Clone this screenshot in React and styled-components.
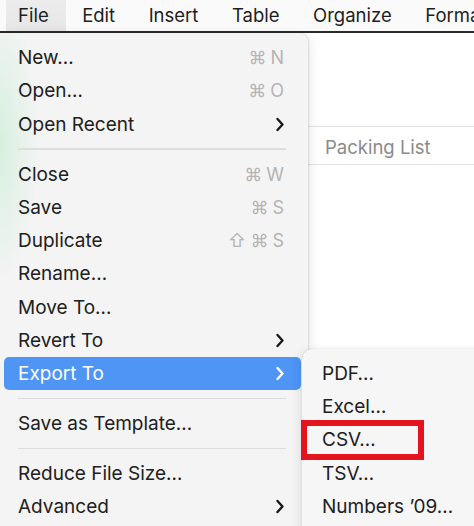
import React from "react";
import styled, { createGlobalStyle } from "styled-components";

const Global = createGlobalStyle`
  html, body { margin: 0; padding: 0; background: #ffffff; overflow: hidden; }
  body { font-family: Inter, "Noto Sans", "Liberation Sans", sans-serif; -webkit-font-smoothing: antialiased; }
`;

const Page = styled.div`
  width: 474px;
  height: 526px;
  display: flex;
  flex-direction: column;
  overflow: hidden;
  background: #fff;
`;

const MenuBar = styled.div`
  height: 31px;
  display: flex;
  align-items: stretch;
  padding-left: 6px;
  background: #fafafa;
  border-bottom: 2px solid #2a2a2a;
  flex-shrink: 0;
`;

const BarItem = styled.div`
  display: flex;
  align-items: center;
  padding: 0 ${p => (p.$active ? "17px" : "17px")} 2px ${p => (p.$active ? "12px" : "16.5px")};
  font-size: 18.5px;
  color: #1e1e1e;
  white-space: nowrap;
  background: ${p => (p.$active ? "linear-gradient(#ececec, #e6e6e6)" : "transparent")};
`;

const Workspace = styled.div`
  position: relative;
  flex: 1;
  background: #fff;
`;

const Sheet = styled.div`
  padding-top: 93px;
`;

const HeaderRow = styled.div`
  height: 39px;
  border-top: 1px solid #e3e3e3;
  border-bottom: 1px solid #e3e3e3;
  display: flex;
  align-items: center;
  padding-left: 325px;
  padding-top: 2px;
  box-sizing: border-box;
  font-size: 18.5px;
  color: #8a8a8a;
`;

const Menu = styled.div`
  position: absolute;
  top: 0;
  left: 0;
  width: 308px;
  bottom: -20px;
  padding-top: 8px;
  box-sizing: border-box;
  background:
    radial-gradient(ellipse 40px 140px at 0px 110px, rgba(190, 235, 205, 0.55), rgba(190, 235, 205, 0) 100%),
    #f4f4f4;
  border-top-right-radius: 9px;
  box-shadow: 1px 0 2px rgba(0,0,0,0.12), 4px 0 12px rgba(0,0,0,0.06);
`;

const Row = styled.div`
  height: 33.3px;
  margin: 0 7px 0 4px;
  padding: 0 16px 0 14px;
  border-radius: 5px;
  display: flex;
  align-items: center;
  justify-content: space-between;
  font-size: 19px;
  color: ${p => (p.$selected ? "#ffffff" : "#202020")};
  background: ${p => (p.$selected ? "#4f95f6" : "transparent")};
  white-space: nowrap;
`;

const Shortcut = styled.span`
  color: #b4b4b4;
  font-size: 18px;
  letter-spacing: 1px;
  display: flex;
  align-items: center;
  gap: 3px;
`;

const Sep = styled.div`
  height: 1.5px;
  background: #dddddd;
  margin: 7.5px 22px 7.5px 18px;
`;

const Submenu = styled.div`
  position: absolute;
  top: 316px;
  left: 302px;
  width: 200px;
  height: 260px;
  padding-top: 7.5px;
  box-sizing: border-box;
  background: #f6f6f6;
  border-top-left-radius: 10px;
  box-shadow: 0 0 1px rgba(0,0,0,0.25), -2px 2px 10px rgba(0,0,0,0.10);
`;

const SubRow = styled.div`
  height: 33.3px;
  display: flex;
  align-items: center;
  padding-left: 20px;
  font-size: 19px;
  color: #202020;
  white-space: nowrap;
`;

const Highlight = styled.div`
  position: absolute;
  left: 301px;
  top: 387px;
  width: 123px;
  height: 40px;
  box-sizing: border-box;
  border: 6px solid #e3141d;
`;

const Chevron = ({ color = "#1a1a1a" }) => (
  <svg width="10" height="15" viewBox="0 0 10 15" aria-hidden="true">
    <path d="M2.5 2 L7.5 7.5 L2.5 13" fill="none" stroke={color} strokeWidth="2.4" strokeLinecap="round" strokeLinejoin="round" />
  </svg>
);

const items = [
  { label: "New…", sc: ["⌘", "N"] },
  { label: "Open…", sc: ["⌘", "O"] },
  { label: "Open Recent", sub: true },
  "sep",
  { label: "Close", sc: ["⌘", "W"] },
  { label: "Save", sc: ["⌘", "S"] },
  { label: "Duplicate", sc: ["⇧", "⌘", "S"] },
  { label: "Rename…" },
  { label: "Move To…" },
  { label: "Revert To", sub: true },
  { label: "Export To", sub: true, selected: true },
  "sep",
  { label: "Save as Template…" },
  "sep",
  { label: "Reduce File Size…" },
  { label: "Advanced", sub: true },
];

const exportItems = ["PDF…", "Excel…", "CSV…", "TSV…", "Numbers ’09…"];

export default function App() {
  return (
    <Page>
      <Global />
      <MenuBar>
        <BarItem $active>File</BarItem>
        <BarItem>Edit</BarItem>
        <BarItem>Insert</BarItem>
        <BarItem>Table</BarItem>
        <BarItem>Organize</BarItem>
        <BarItem>Format</BarItem>
      </MenuBar>
      <Workspace>
        <Sheet>
          <HeaderRow>Packing List</HeaderRow>
        </Sheet>
        <Menu>
          {items.map((it, i) =>
            it === "sep" ? (
              <Sep key={i} />
            ) : (
              <Row key={i} $selected={it.selected}>
                <span>{it.label}</span>
                {it.sc && (
                  <Shortcut>
                    {it.sc.map((s, j) => (
                      <span key={j}>{s}</span>
                    ))}
                  </Shortcut>
                )}
                {it.sub && <Chevron color={it.selected ? "#ffffff" : "#1a1a1a"} />}
              </Row>
            )
          )}
        </Menu>
        <Submenu>
          {exportItems.map(l => (
            <SubRow key={l}>{l}</SubRow>
          ))}
        </Submenu>
        <Highlight />
      </Workspace>
    </Page>
  );
}
